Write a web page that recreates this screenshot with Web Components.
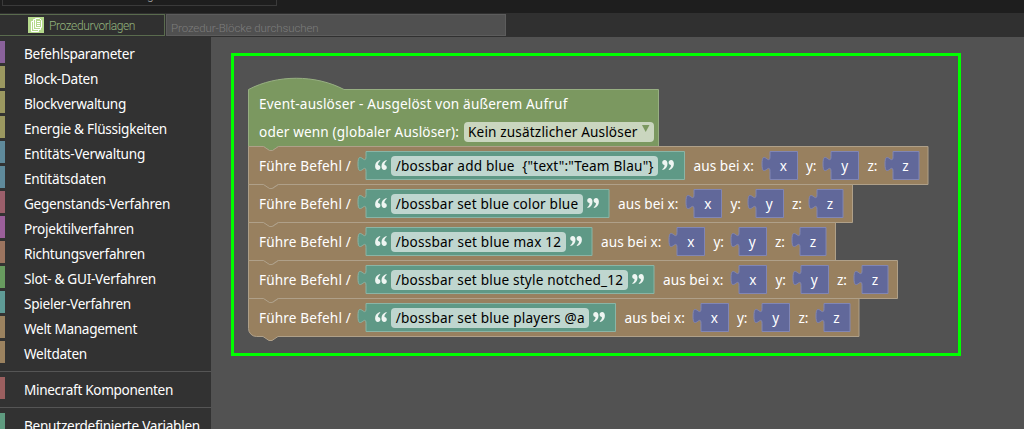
<!DOCTYPE html>
<html lang="de">
<head>
<meta charset="utf-8">
<title>Prozedur-Editor</title>
<style>
html,body{margin:0;height:429px;overflow:hidden;background:#525252;font-family:"Noto Sans",sans-serif;font-size:13.6px;color:#fff}
</style>
</head>
<body>
<procedure-editor></procedure-editor>
<script>
const define = (name, html, init) => customElements.define(name, class extends HTMLElement {
  connectedCallback() {
    if (this.shadowRoot) return;
    const t = document.createElement('template');
    t.innerHTML = typeof html === 'function' ? html(this) : html;
    this.attachShadow({mode: 'open'}).append(t.content.cloneNode(true));
    if (init) init(this, this.shadowRoot);
  }
});

/* A label whose letter spacing is tuned so that it fills the width in "w". */
define('fit-label', `<style>
:host{display:block;white-space:pre;line-height:20px;flex:none}
span{display:inline-block}
</style><span><slot></slot></span>`, (el, root) => {
  const w = parseFloat(el.getAttribute('w'));
  if (!w) return;
  const s = root.querySelector('span');
  const n = el.textContent.length;
  const nat = s.getBoundingClientRect().width;
  s.style.letterSpacing = ((w - nat) / n) + 'px';
  el.style.width = w + 'px';
});

define('category-row', el => `<style>
:host{display:flex;align-items:center;height:22px;margin-bottom:3px}
i{width:5px;height:22px;background:${el.getAttribute('color')};margin-right:19px}
fit-label{margin-top:4px}
</style><i></i><fit-label w="${el.getAttribute('w')}">${el.getAttribute('label')}</fit-label>`);

define('category-list', `<style>
:host{display:block;width:211px;height:392px;box-sizing:border-box;padding-top:4px;background:#323232;overflow:hidden}
hr{border:0;height:1px;background:#555;margin:8px 0 5px}
</style>
<category-row color="#8a629b" w="110.5" label="Befehlsparameter"></category-row>
<category-row color="#9b9860" w="74" label="Block-Daten"></category-row>
<category-row color="#9b9860" w="102" label="Blockverwaltung"></category-row>
<category-row color="#9b9860" w="143" label="Energie &amp;amp; Flüssigkeiten"></category-row>
<category-row color="#5f8a9b" w="121" label="Entitäts-Verwaltung"></category-row>
<category-row color="#5f8a9b" w="82" label="Entitätsdaten"></category-row>
<category-row color="#9b5f6b" w="146" label="Gegenstands-Verfahren"></category-row>
<category-row color="#9b5f9a" w="110" label="Projektilverfahren"></category-row>
<category-row color="#9b745f" w="121" label="Richtungsverfahren"></category-row>
<category-row color="#689b5f" w="132" label="Slot- &amp;amp; GUI-Verfahren"></category-row>
<category-row color="#5f9b96" w="107" label="Spieler-Verfahren"></category-row>
<category-row color="#9b825f" w="113" label="Welt Management"></category-row>
<category-row color="#9b825f" w="63" label="Weltdaten"></category-row>
<hr>
<category-row color="#9b5f5f" w="149" label="Minecraft Komponenten"></category-row>
<hr>
<category-row color="#5f9b80" w="176" label="Benutzerdefinierte Variablen"></category-row>`);

define('tool-bar', `<style>
:host{display:block;height:37px;background:#303030;font-family:Roboto,sans-serif;font-weight:300;font-size:12px}
.top{height:13px;background:#1e1e1e;overflow:hidden;display:flex}
.box{width:273px;height:5px;margin-left:2px;border:solid #3a3a3a;border-width:0 1px 1px;overflow:hidden;color:#aaa}
.box fit-label{margin:-15px 0 0 144px}
.bar{display:flex;height:24px;padding-top:1px;box-sizing:border-box}
.tab{width:164px;height:20px;border:1px solid #5a6b4e;border-left:0;display:flex;align-items:center;color:#93b47d}
.tab svg{margin:0 5px 0 28px}
.tab fit-label{margin-top:2px}
.search{box-sizing:border-box;width:340px;height:22px;margin-left:1px;border:1px solid #5c5c5c;background:#505050;color:#7c7c7c;padding:3px 0 0 4px;font-size:11.5px}
</style>
<div class="top"><div class="box"><fit-label>g</fit-label></div></div>
<div class="bar"><div class="tab">
<svg width="16" height="16" viewBox="0 0 16 16"><rect width="16" height="16" fill="#b5d98c"/><g fill="none" stroke="#fff"><path d="M5.5 4.500H3.500V14.500H10.500V12.500M7.500 2.500H5.500V12.500H12.500V11"/><path d="M7.500 1.500H11.500L13.500 3.500V10.500H7.500zM9 4.500H12M9 6.500H12M9 8.500H12"/></g></svg>
<fit-label w="86">Prozedurvorlagen</fit-label></div>
<div class="search"><fit-label w="147.500">Prozedur-Blöcke durchsuchen</fit-label></div></div>`);

/* Value block with a puzzle tab on its left edge. */
define('value-block', el => {
  const w = +el.getAttribute('w'), c = el.getAttribute('fill'), b = el.getAttribute('edge');
  return `<style>
:host{display:flex;position:relative;flex:none;width:${w}px;height:29px;align-items:center;box-sizing:border-box}
svg.bg{position:absolute;left:-8px;top:0;overflow:visible}
.in{position:relative;display:flex;align-items:center;width:100%;height:100%;justify-content:center}
</style><svg class="bg" width="${w + 8}" height="29"><path d="M8 .5V5.500c0 10-8-8-8 7.500s8-2.500 8 7.500V28.500H${w + 8}V.5z" fill="${c}" stroke="${b}"/></svg><div class="in"><slot></slot></div>`;
});

define('quote-mark', el => `<style>:host{display:block;flex:none;width:12px;height:12px}svg{display:block}</style>
<svg width="12" height="12" viewBox="0 0 12 12"><g fill="#eef5f2" ${el.hasAttribute('close') ? 'transform="rotate(180 6 6)"' : ''}><path d="M5 .9C2 1.700.1 4.100.1 7.200c0 2.300 1.100 3.800 2.800 3.800 1.400 0 2.500-1 2.500-2.500S4.400 6.100 3.100 6.100C3 4.400 3.600 3 5.300 1.800zM11.400.9C8.400 1.700 6.500 4.100 6.500 7.200c0 2.300 1.100 3.800 2.800 3.800 1.400 0 2.500-1 2.500-2.500s-1-2.400-2.300-2.400C9.400 4.400 10 3 11.700 1.800z"/></g></svg>`);

define('text-field', el => `<style>
:host{display:flex;flex:none;align-items:center;box-sizing:border-box;width:${el.getAttribute('w')}px;height:20px;border-radius:4px;padding-left:4.500px;background:${el.getAttribute('bg')};color:#000}
</style><slot></slot>`);

define('event-block', `<style>
:host{display:block;position:relative;width:411px;height:57px}
svg.bg{position:absolute;left:0;top:-12px;overflow:visible}
.c{position:relative;padding:5px 0 0 11px}
.l{display:flex;height:20px;align-items:center;margin-bottom:8px}
text-field{margin-left:4.500px}
.arr{margin:-7px 0 0 4.500px}
</style>
<svg class="bg" width="411" height="70"><path d="M.5 69.500V12.500c28.500-15 67-15 95.500 0H410.500V69.500H30.500l-6 4h-3l-6-4z" fill="#7b9860" stroke="#97af82"/></svg>
<div class="c"><div class="l"><fit-label w="308.500">Event-auslöser - Ausgelöst von äußerem Aufruf</fit-label></div>
<div class="l"><fit-label w="200">oder wenn (globaler Auslöser):</fit-label>
<text-field w="190" bg="#cad6bf"><fit-label w="169.500">Kein zusätzlicher Auslöser</fit-label><svg class="arr" width="8" height="7"><path d="M0 0H7.500L3.700 7z" fill="#7b9860"/></svg></text-field></div></div>`);

define('command-block', el => {
  const f = +el.getAttribute('field'), total = f + 413.5, last = el.hasAttribute('last');
  const xyz = (n, w) => `<value-block w="${w}" fill="#61689a" edge="#8186b4"><fit-label>${n}</fit-label></value-block>`;
  const foot = last ? 'V30.500a8 8 0 0 0 8 8H15' : 'V38.500H15';
  return `<style>
:host{display:block;position:relative;width:${total}px;height:38px}
svg.bg{position:absolute;left:0;top:0;overflow:visible}
.c{position:relative;display:flex;align-items:center;height:39px;padding-left:11px}
.val{margin-left:14.5px}
fit-label{margin-top:1px}
quote-mark{margin:-2px 4px 0 4px}
quote-mark[close]{margin-left:4px}
.a{margin-left:9.500px}.xb{margin-left:15.500px}.y{margin-left:9px}.y + .xb{margin-left:15px}
</style>
<svg class="bg" width="${total}" height="44"><path d="M.5 .5${foot}l6 4h3l6-4H${total - .5}V.5H30.500l-6 4h-3l-6-4z" fill="#98805f" stroke="#afa089"/></svg>
<div class="c"><fit-label w="92">Führe Befehl /</fit-label>
<value-block class="val" w="${f + 51.5}" fill="#5f9986" edge="#8ab5a6"><quote-mark></quote-mark><text-field w="${f}" bg="#bfd6cf"><fit-label w="${f - 9}">${el.getAttribute('text')}</fit-label></text-field><quote-mark close></quote-mark></value-block>
<fit-label class="a" w="60.500">aus bei x:</fit-label><span class="xb">${xyz('x', 27.5)}</span>
<fit-label class="y" w="10">y:</fit-label><span class="xb">${xyz('y', 27.5)}</span>
<fit-label class="y" w="10">z:</fit-label><span class="xb">${xyz('z', 26)}</span></div>`;
});

define('block-workspace', `<style>
:host{display:block;flex:1;padding:16px 0 0 20px;background:#525252}
.frame{box-sizing:border-box;width:730px;height:303px;border:3px solid #0f0;padding:33px 0 0 14px}
</style><div class="frame">
<event-block></event-block>
<command-block field="267" text="/bossbar add blue  {&quot;text&quot;:&quot;Team Blau&quot;}"></command-block>
<command-block field="191.500" text="/bossbar set blue color blue"></command-block>
<command-block field="174.500" text="/bossbar set blue max 12"></command-block>
<command-block field="236.500" text="/bossbar set blue style notched_12"></command-block>
<command-block last field="198" text="/bossbar set blue players @a"></command-block>
</div>`);

define('procedure-editor', `<style>
:host{display:flex;flex-direction:column;height:429px}
main{display:flex;flex:1}
</style><tool-bar></tool-bar><main><category-list></category-list><block-workspace></block-workspace></main>`);
</script>
</body>
</html>
